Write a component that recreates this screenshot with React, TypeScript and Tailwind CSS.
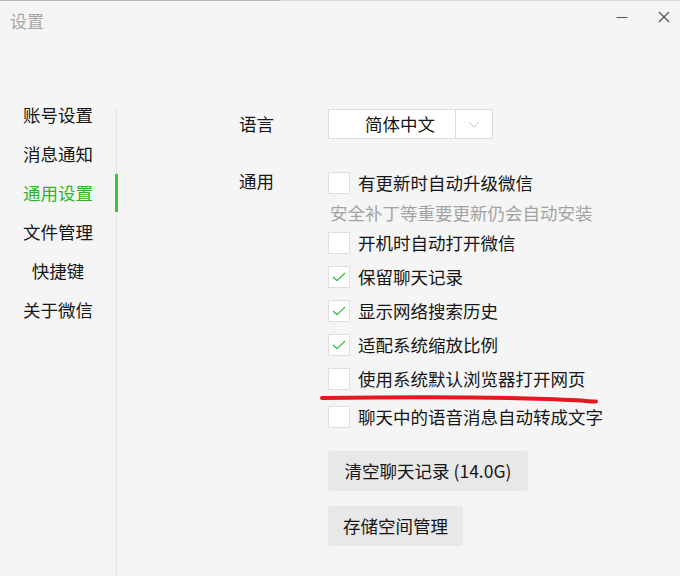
import React from "react";

const FONT = "font-['Noto_Sans_CJK_SC','Noto_Sans',sans-serif]";

const navItems = ["账号设置", "消息通知", "通用设置", "文件管理", "快捷键", "关于微信"];

function CheckBox({ checked }: { checked?: boolean }) {
  return (
    <div className="w-[22px] h-[22px] shrink-0 bg-white border border-[#dedede] flex items-center justify-center">
      {checked && (
        <svg width="14" height="10" viewBox="0 0 14 10" fill="none">
          <path d="M1 5 L5 8.6 L13 1" stroke="#3cbf46" strokeWidth="1.3" />
        </svg>
      )}
    </div>
  );
}

function Option({ label, checked, className = "h-[34px]" }: { label: string; checked?: boolean; className?: string }) {
  return (
    <div className={`flex items-center gap-[8px] ${className}`}>
      <CheckBox checked={checked} />
      <span className="text-[17.5px] leading-none text-[#161616]">{label}</span>
    </div>
  );
}

export default function App() {
  return (
    <div className={`relative w-[680px] h-[576px] bg-[#f5f5f5] overflow-hidden flex flex-col ${FONT}`}>
      {/* top edge */}
      <div className="flex h-px shrink-0">
        <div className="w-[280px] bg-[#b5b5b5]" />
        <div className="flex-1 bg-[#dadada]" />
      </div>

      {/* title bar */}
      <div className="flex items-start h-[95px] shrink-0">
        <div className="pl-[10px] pt-[9px] text-[17px] leading-[22px] text-[#a6a6a6]">设置</div>
        <div className="ml-auto flex items-center gap-[30px] pr-[10px] pt-[10px]">
          <svg width="12" height="12" viewBox="0 0 12 12">
            <path d="M0.5 6.5 H11.5" stroke="#555" strokeWidth="1" />
          </svg>
          <svg width="12" height="12" viewBox="0 0 12 12">
            <path d="M1 1 L11 11 M11 1 L1 11" stroke="#555" strokeWidth="1.3" />
          </svg>
        </div>
      </div>

      {/* body */}
      <div className="flex flex-1">
        {/* sidebar */}
        <div className="w-[116px] flex flex-col -mt-[1px]">
          {navItems.map((item) => (
            <div
              key={item}
              className={`h-[39px] flex items-center justify-center text-[17.5px] leading-none ${
                item === "通用设置" ? "text-[#2ab52a]" : "text-[#161616]"
              }`}
            >
              {item}
            </div>
          ))}
        </div>
        <div className="relative w-px mt-[12px] bg-[#e3e3e3]">
          <div className="absolute left-[-1px] top-[66px] w-[3px] h-[38px] bg-[#3cc43c]" />
        </div>

        {/* content */}
        <div className="flex-1 pl-[122px] flex flex-col">
          {/* language */}
          <div className="flex items-center mt-[13px] h-[30px]">
            <div className="w-[89px] text-[17.5px] leading-none text-[#161616]">语言</div>
            <div className="flex w-[165px] h-[30px] bg-white border border-[#dcdcdc]">
              <div className="w-[126px] pl-[36px] flex items-center text-[17.5px] leading-none text-[#161616]">简体中文</div>
              <div className="flex-1 border-l border-[#dcdcdc] flex items-center justify-center">
                <svg width="12" height="7" viewBox="0 0 12 7">
                  <path d="M1 1 L6 6 L11 1" stroke="#c4c4c4" strokeWidth="1" fill="none" />
                </svg>
              </div>
            </div>
          </div>

          {/* general */}
          <div className="flex mt-[29px]">
            <div className="w-[89px] pt-[3px] text-[17.5px] leading-[20px] text-[#161616]">通用</div>
            <div className="flex flex-col">
              <Option label="有更新时自动升级微信" className="h-[30px]" />
              <div className="h-[30px] flex items-center pl-[2px] text-[17.5px] leading-none text-[#a3a3a3]">
                安全补丁等重要更新仍会自动安装
              </div>
              <Option label="开机时自动打开微信" className="h-[30px]" />
              <div className="h-[2px]" />
              <Option label="保留聊天记录" checked />
              <Option label="显示网络搜索历史" checked />
              <Option label="适配系统缩放比例" checked />
              <Option label="使用系统默认浏览器打开网页" />
              <Option label="聊天中的语音消息自动转成文字" className="h-[34px] mt-[4px]" />

              <button className="mt-[17px] w-[200px] h-[40px] rounded-[3px] bg-[#e8e8e8] flex items-center justify-center text-[17.5px] leading-none text-[#161616]">
                清空聊天记录 (14.0G)
              </button>
              <button className="mt-[15px] w-[135px] h-[40px] rounded-[3px] bg-[#e8e8e8] flex items-center justify-center text-[17.5px] leading-none text-[#161616]">
                存储空间管理
              </button>
            </div>
          </div>
        </div>
      </div>

      {/* hand-drawn red underline */}
      <svg className="absolute left-[318px] top-[392px]" width="284" height="14" viewBox="0 0 284 14" fill="none">
        <path d="M4 6 C 80 5, 170 5, 228 7 S 268 10, 278 9.5" stroke="#e3191f" strokeWidth="4" strokeLinecap="round" />
      </svg>
    </div>
  );
}
